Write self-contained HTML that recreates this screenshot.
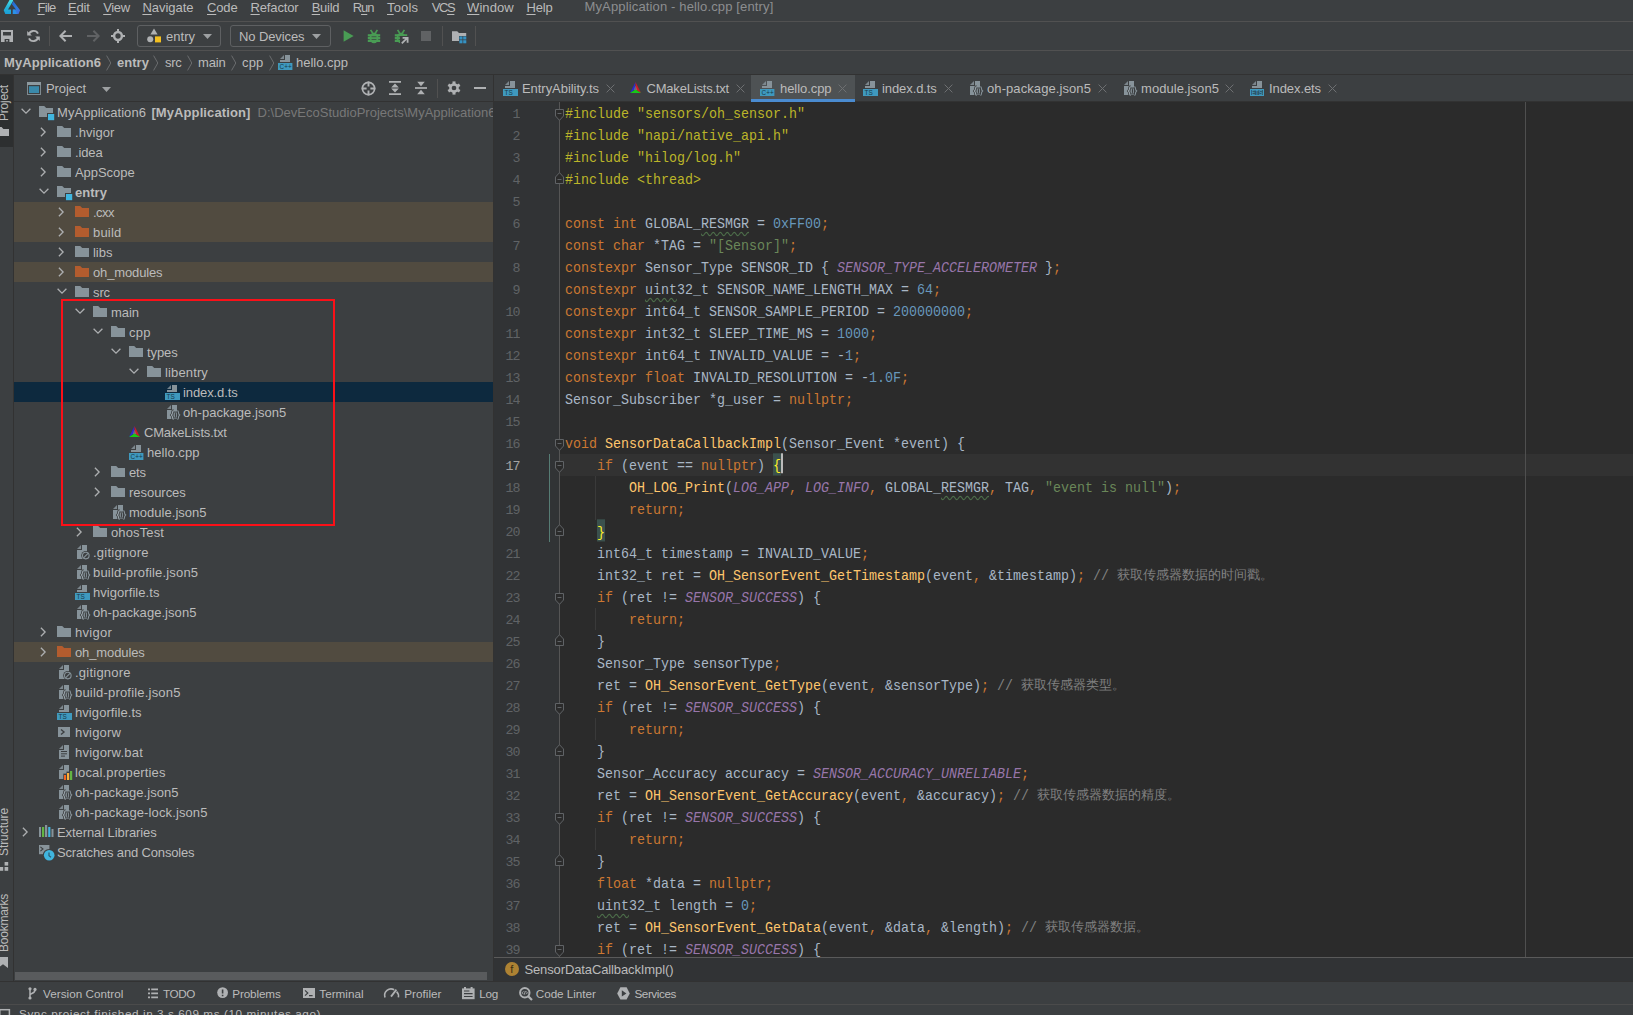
<!DOCTYPE html>
<html lang="en"><head><meta charset="utf-8"><title>MyApplication - hello.cpp [entry]</title>
<style>
html,body{margin:0;padding:0;background:#3c3f41;}
body{width:1633px;height:1015px;overflow:hidden;}
#app{position:relative;width:1633px;height:1015px;overflow:hidden;background:#3c3f41;
 font-family:"Liberation Sans",sans-serif;font-size:13px;color:#bbbbbb;}
#app *{box-sizing:border-box;}
.t{position:absolute;white-space:nowrap;margin:0;padding:0;}
.a{position:absolute;}
svg{position:absolute;overflow:visible;display:block;}
u{text-decoration:underline;text-underline-offset:2px;text-decoration-thickness:1px;}
.hl{position:absolute;height:1px;background:#515151;}
.vl{position:absolute;width:1px;background:#515151;}
/* code */
#code{position:absolute;left:565px;top:104px;font-family:"Liberation Mono",monospace;font-size:13.333px;
 color:#a9b7c6;white-space:pre;}
#code .l{height:22px;line-height:22px;transform:scaleY(1.11);transform-origin:0 14.5px;}
#nums{position:absolute;left:494px;top:104px;width:25.8px;letter-spacing:-0.8px;text-align:right;font-family:"Liberation Mono",monospace;
 font-size:13.333px;color:#606366;}
#nums div{height:22px;line-height:22px;}
.k{color:#cc7832;}
.f{color:#ffc66d;}
.s{color:#6a8759;}
.n{color:#6897bb;}
.m{color:#bbb529;}
.c{color:#9876aa;font-style:italic;}
.cm{color:#808080;}
.cj{transform:scaleY(0.9);transform-origin:0 14.5px;display:inline-block;vertical-align:top;height:22px;line-height:18px;overflow:hidden;font-family:"Liberation Sans",sans-serif;font-size:13px;}
.w{text-decoration:underline wavy #4d6f4a;text-decoration-thickness:1px;text-underline-offset:3px;}
.br{color:#ffef28;background:#3b514d;padding:4.5px 0 0.5px;}
.caret{display:inline-block;width:2px;height:18px;background:#bbbbbb;vertical-align:middle;margin:-4px -2px 0 0;}

</style></head>
<body>
<div id="app">
<!-- menu bar -->
<svg style="left:0;top:0" width="24" height="16" viewBox="0 0 24 16"><defs><linearGradient id="lgA" x1="0" y1="0" x2="0" y2="1"><stop offset="0" stop-color="#4fe9ef"/><stop offset="0.55" stop-color="#27b4d8"/><stop offset="1" stop-color="#1a9fd8"/></linearGradient><linearGradient id="lgB" x1="0" y1="0" x2="1" y2="1"><stop offset="0" stop-color="#1f66cc"/><stop offset="0.6" stop-color="#2f7be0"/><stop offset="1" stop-color="#4a68d6"/></linearGradient></defs><path d="M13.4,-1.5 L10.4,-1.5 L3.7,10.2 L5.3,13.9 H11 V9.6 H8 L12.9,1.2 Z" fill="url(#lgA)"/><path d="M13.2,1.0 L20.1,10.2 L18.5,13.9 H12.8 V9.6 H16 L11.9,4.2 Z" fill="url(#lgB)"/><path d="M12.8,9.6 H15 L17,13.9 H12.8 Z" fill="#2b97e8" opacity="0.8"/></svg>
<div class="t" style="left:37.4px;top:-2.5px;height:20px;line-height:20px;font-size:13px;letter-spacing:-0.663px;"><u>F</u>ile</div>
<div class="t" style="left:68px;top:-2.5px;height:20px;line-height:20px;font-size:13px;letter-spacing:-0.177px;"><u>E</u>dit</div>
<div class="t" style="left:103.2px;top:-2.5px;height:20px;line-height:20px;font-size:13px;letter-spacing:-0.338px;"><u>V</u>iew</div>
<div class="t" style="left:142.4px;top:-2.5px;height:20px;line-height:20px;font-size:13px;letter-spacing:-0.029px;"><u>N</u>avigate</div>
<div class="t" style="left:207px;top:-2.5px;height:20px;line-height:20px;font-size:13px;letter-spacing:-0.123px;"><u>C</u>ode</div>
<div class="t" style="left:250.5px;top:-2.5px;height:20px;line-height:20px;font-size:13px;letter-spacing:-0.143px;"><u>R</u>efactor</div>
<div class="t" style="left:311.7px;top:-2.5px;height:20px;line-height:20px;font-size:13px;letter-spacing:-0.264px;"><u>B</u>uild</div>
<div class="t" style="left:352.7px;top:-2.5px;height:20px;line-height:20px;font-size:13px;letter-spacing:-1.02px;">R<u>u</u>n</div>
<div class="t" style="left:387px;top:-2.5px;height:20px;line-height:20px;font-size:13px;letter-spacing:0.188px;"><u>T</u>ools</div>
<div class="t" style="left:431.7px;top:-2.5px;height:20px;line-height:20px;font-size:13px;letter-spacing:-1.345px;">VC<u>S</u></div>
<div class="t" style="left:467px;top:-2.5px;height:20px;line-height:20px;font-size:13px;letter-spacing:0.092px;"><u>W</u>indow</div>
<div class="t" style="left:526.4px;top:-2.5px;height:20px;line-height:20px;font-size:13px;letter-spacing:-0.162px;"><u>H</u>elp</div>
<div class="t" style="left:584.5px;top:-3.5px;height:20px;line-height:20px;font-size:13px;letter-spacing:0.143px;color:#8c8e90;">MyApplication - hello.cpp [entry]</div>
<div class="hl" style="left:0;top:21px;width:1633px"></div>
<!-- toolbar -->
<svg style="left:1px;top:30px" width="12" height="12" viewBox="0 0 12 12"><path d="M0,0 H12 V12 H0 Z M2,2 V5.6 H10 V2 Z M3.6,9 V12 H8.4 V9 Z" fill="#afb1b3" fill-rule="evenodd"/><rect x="5" y="10.2" width="2" height="1.2" fill="#afb1b3"/></svg>
<svg style="left:27px;top:29px" width="13" height="14" viewBox="0 0 13 14"><path d="M1.8,6 A4.9,4.9 0 0 1 11,4.6" fill="none" stroke="#afb1b3" stroke-width="1.9"/><path d="M11.2,8 A4.9,4.9 0 0 1 2,9.4" fill="none" stroke="#afb1b3" stroke-width="1.9"/><path d="M0.2,2 L0.2,6.6 L4.8,6.6 Z" fill="#afb1b3"/><path d="M12.8,12 L12.8,7.4 L8.2,7.4 Z" fill="#afb1b3"/></svg>
<div class="vl" style="left:49px;top:26px;height:20px"></div>
<svg style="left:59px;top:30px" width="14" height="12" viewBox="0 0 14 12"><path d="M13,6 H2 M6.6,0.8 L1.4,6 L6.6,11.2" fill="none" stroke="#afb1b3" stroke-width="2"/></svg>
<svg style="left:86px;top:30px" width="14" height="12" viewBox="0 0 14 12"><path d="M1,6 H12 M7.4,0.8 L12.6,6 L7.4,11.2" fill="none" stroke="#606264" stroke-width="2"/></svg>
<svg style="left:111px;top:29px" width="14" height="14" viewBox="0 0 14 14"><circle cx="7" cy="7" r="3.9" fill="none" stroke="#afb1b3" stroke-width="2.5"/><path d="M7,0 V2.4 M7,11.6 V14 M0,7 H2.4 M11.6,7 H14" stroke="#afb1b3" stroke-width="2"/></svg>
<div class="a" style="left:137px;top:25px;width:84px;height:22px;border:1px solid #5e6062;border-radius:3px"></div>
<svg style="left:147px;top:28px" width="15" height="15" viewBox="0 0 15 15"><path d="M7,0.4 L10.6,6.4 H3.4 Z" fill="#afb1b3"/><circle cx="3.2" cy="11.2" r="3" fill="#afb1b3"/><rect x="8" y="8.4" width="6" height="6" fill="#f4c020"/></svg>
<div class="t" style="left:166px;top:26.5px;height:20px;line-height:20px;font-size:13px;letter-spacing:0.019px;">entry</div>
<svg style="left:203px;top:34px" width="9" height="5" viewBox="0 0 9 5"><path d="M0,0 H9 L4.5,5 Z" fill="#9da0a2"/></svg>
<div class="a" style="left:230px;top:25px;width:101px;height:22px;border:1px solid #5e6062;border-radius:3px"></div>
<div class="t" style="left:239px;top:26.5px;height:20px;line-height:20px;font-size:13px;letter-spacing:-0.098px;">No Devices</div>
<svg style="left:312px;top:34px" width="9" height="5" viewBox="0 0 9 5"><path d="M0,0 H9 L4.5,5 Z" fill="#9da0a2"/></svg>
<svg style="left:343px;top:30px" width="11" height="12" viewBox="0 0 11 12"><path d="M0.6,0.2 L10.6,6 L0.6,11.8 Z" fill="#499c54"/></svg>
<svg style="left:367px;top:28.6px" width="14" height="15" viewBox="0 0 14 15"><g fill="#499c54"><ellipse cx="7" cy="8.9" rx="4.5" ry="5.3"/><rect x="0.8" y="5.2" width="12.4" height="2.2"/><rect x="0.8" y="8" width="12.4" height="2.2"/><rect x="0.8" y="10.8" width="12.4" height="2.2"/></g><path d="M3.6,0.8 L5.6,4 M10.4,0.8 L8.4,4" stroke="#499c54" stroke-width="1.6" fill="none"/><path d="M4.6,7.7 H9.4 M4.6,10.5 H9.4" stroke="#3c3f41" stroke-width="0.7"/></svg>
<svg style="left:393.5px;top:28.6px" width="14" height="15" viewBox="0 0 14 15"><g fill="#499c54"><ellipse cx="7" cy="8.9" rx="4.5" ry="5.3"/><rect x="0.8" y="5.2" width="12.4" height="2.2"/><rect x="0.8" y="8" width="12.4" height="2.2"/><rect x="0.8" y="10.8" width="12.4" height="2.2"/></g><path d="M3.6,0.8 L5.6,4 M10.4,0.8 L8.4,4" stroke="#499c54" stroke-width="1.6" fill="none"/><path d="M4.6,7.7 H9.4 M4.6,10.5 H9.4" stroke="#3c3f41" stroke-width="0.7"/></svg>
<svg style="left:400px;top:36px" width="9" height="9" viewBox="0 0 9 9"><rect x="0" y="0" width="9" height="9" fill="#3c3f41"/><path d="M1.8,7.4 L6.6,2.6 M2.6,1.8 H7.6 V6.8" fill="none" stroke="#afb1b3" stroke-width="1.8"/></svg>
<div class="a" style="left:421px;top:31px;width:10px;height:10px;background:#606264"></div>
<div class="vl" style="left:442px;top:26px;height:20px"></div>
<svg style="left:452px;top:31px" width="15" height="13" viewBox="0 0 15 13"><path d="M0,0.3 H5.2 L7,2 H14.2 V5 H7 V10 H0 Z" fill="#afb1b3"/><rect x="7.4" y="5.4" width="3.1" height="3.1" fill="#3592c4"/><rect x="11.2" y="5.4" width="3.1" height="3.1" fill="#3592c4"/><rect x="7.4" y="9.2" width="3.1" height="3.1" fill="#3592c4"/><rect x="11.2" y="9.2" width="3.1" height="3.1" fill="#3592c4"/></svg>
<div class="vl" style="left:475px;top:26px;height:20px"></div>
<div class="hl" style="left:0;top:50px;width:1633px"></div>
<!-- navigation bar -->
<div class="t" style="left:4px;top:52.5px;height:20px;line-height:20px;font-size:13px;letter-spacing:0.067px;font-weight:bold;">MyApplication6</div>
<svg style="left:106px;top:55px" width="6" height="16" viewBox="0 0 6 16"><path d="M0.6,0.6 L4.8,8 L0.6,15.4" fill="none" stroke="#6a6c6e" stroke-width="1"/></svg>
<div class="t" style="left:117px;top:52.5px;height:20px;line-height:20px;font-size:13px;letter-spacing:0.041px;font-weight:bold;">entry</div>
<svg style="left:153px;top:55px" width="6" height="16" viewBox="0 0 6 16"><path d="M0.6,0.6 L4.8,8 L0.6,15.4" fill="none" stroke="#6a6c6e" stroke-width="1"/></svg>
<div class="t" style="left:165px;top:52.5px;height:20px;line-height:20px;font-size:13px;letter-spacing:-0.276px;">src</div>
<svg style="left:187px;top:55px" width="6" height="16" viewBox="0 0 6 16"><path d="M0.6,0.6 L4.8,8 L0.6,15.4" fill="none" stroke="#6a6c6e" stroke-width="1"/></svg>
<div class="t" style="left:198px;top:52.5px;height:20px;line-height:20px;font-size:13px;letter-spacing:-0.172px;">main</div>
<svg style="left:231px;top:55px" width="6" height="16" viewBox="0 0 6 16"><path d="M0.6,0.6 L4.8,8 L0.6,15.4" fill="none" stroke="#6a6c6e" stroke-width="1"/></svg>
<div class="t" style="left:242px;top:52.5px;height:20px;line-height:20px;font-size:13px;letter-spacing:0.177px;">cpp</div>
<svg style="left:269px;top:55px" width="6" height="16" viewBox="0 0 6 16"><path d="M0.6,0.6 L4.8,8 L0.6,15.4" fill="none" stroke="#6a6c6e" stroke-width="1"/></svg>
<svg style="left:277.6px;top:54px" width="16" height="16" viewBox="0 0 16 16"><path d="M2,5 L6,1 V5 Z" fill="#87939a" opacity="0.85"/><path d="M7,1 H12 V8 H2 V6 H7 Z" fill="#87939a"/><rect x="0" y="9" width="14.4" height="7" fill="#3f99be"/><text x="1.6" y="15.1" font-family="Liberation Sans,sans-serif" font-size="6.8" fill="#173a4a" textLength="12" lengthAdjust="spacingAndGlyphs">C++</text></svg>
<div class="t" style="left:296px;top:52.5px;height:20px;line-height:20px;font-size:13px;letter-spacing:-0.007px;">hello.cpp</div>
<div class="hl" style="left:0;top:74px;width:1633px;background:#323232"></div>
<!-- left strip -->
<div class="a" style="left:0;top:75px;width:13px;height:72px;background:#2d2f30"></div>
<div class="vl" style="left:13px;top:75px;height:907px;background:#323232"></div>
<div class="t" style="left:-3px;top:121px;width:40px;height:14px;line-height:14px;font-size:12px;letter-spacing:-0.192px;color:#bbbbbb;transform-origin:0 0;transform:rotate(-90deg)">Project</div>
<svg style="left:0px;top:127px" width="9" height="9" viewBox="0 0 9 9"><path d="M-5,0 H1.6 L3.4,2 H9 V9 H-5 Z" fill="#afb1b3"/></svg>
<div class="t" style="left:-3px;top:856px;width:52px;height:14px;line-height:14px;font-size:12px;letter-spacing:-0.075px;color:#bbbbbb;transform-origin:0 0;transform:rotate(-90deg)">Structure</div>
<svg style="left:0px;top:862px" width="9" height="9" viewBox="0 0 9 9"><rect x="4.6" y="0" width="3.6" height="3.6" fill="#afb1b3"/><rect x="-0.4" y="5" width="3.6" height="3.8" fill="#afb1b3"/><rect x="4.6" y="5" width="3.6" height="3.8" fill="#afb1b3"/></svg>
<div class="t" style="left:-3px;top:952px;width:62px;height:14px;line-height:14px;font-size:12px;letter-spacing:-0.224px;color:#bbbbbb;transform-origin:0 0;transform:rotate(-90deg)">Bookmarks</div>
<svg style="left:0px;top:957px" width="9" height="11" viewBox="0 0 9 11"><path d="M-2,0 H8 V11 L3,7.2 L-2,11 Z" fill="#afb1b3"/></svg>
<!-- project header -->
<svg style="left:27px;top:82px" width="14" height="13" viewBox="0 0 14 13"><rect x="0.5" y="0.5" width="13" height="12" fill="none" stroke="#7f8b91" stroke-width="1"/><rect x="0" y="0" width="14" height="3" fill="#8d999f"/><rect x="2" y="4.2" width="10" height="6.8" fill="#3a89aa"/></svg>
<div class="t" style="left:46px;top:78.5px;height:20px;line-height:20px;font-size:13px;letter-spacing:-0.067px;">Project</div>
<svg style="left:102px;top:87px" width="9" height="5" viewBox="0 0 9 5"><path d="M0,0 H9 L4.5,5 Z" fill="#9da0a2"/></svg>
<svg style="left:361px;top:80.5px" width="15" height="15" viewBox="0 0 15 15"><circle cx="7.5" cy="7.5" r="6.1" fill="none" stroke="#afb1b3" stroke-width="1.7"/><path d="M7.5,0.6 V5.6 M7.5,9.4 V14.4 M0.6,7.5 H5.6 M9.4,7.5 H14.4" stroke="#afb1b3" stroke-width="1.9"/></svg>
<svg style="left:389px;top:81px" width="12" height="14" viewBox="0 0 12 14"><path d="M0,0.9 H12 M0,13.1 H12" stroke="#afb1b3" stroke-width="1.7"/><path d="M6,2.6 L9.8,6.4 H2.2 Z M6,11.4 L9.8,7.6 H2.2 Z" fill="#afb1b3"/></svg>
<svg style="left:415px;top:81px" width="12" height="14" viewBox="0 0 12 14"><path d="M0,7 H12" stroke="#afb1b3" stroke-width="1.7"/><path d="M6,5.2 L9.8,0.8 H2.2 Z M6,8.8 L9.8,13.2 H2.2 Z" fill="#afb1b3"/></svg>
<div class="vl" style="left:437px;top:79px;height:19px"></div>
<svg style="left:447px;top:81px" width="14" height="14" viewBox="0 0 14 14"><g transform="translate(7,7)"><rect x="-1.5" y="-6.6" width="3" height="3.2" fill="#afb1b3" transform="rotate(0)"/><rect x="-1.5" y="-6.6" width="3" height="3.2" fill="#afb1b3" transform="rotate(60)"/><rect x="-1.5" y="-6.6" width="3" height="3.2" fill="#afb1b3" transform="rotate(120)"/><rect x="-1.5" y="-6.6" width="3" height="3.2" fill="#afb1b3" transform="rotate(180)"/><rect x="-1.5" y="-6.6" width="3" height="3.2" fill="#afb1b3" transform="rotate(240)"/><rect x="-1.5" y="-6.6" width="3" height="3.2" fill="#afb1b3" transform="rotate(300)"/><circle r="3.6" fill="none" stroke="#afb1b3" stroke-width="2.5"/></g></svg>
<div class="a" style="left:474px;top:87px;width:12px;height:2px;background:#afb1b3"></div>
<div class="hl" style="left:14px;top:101px;width:480px;background:#323232"></div>
<!-- project tree -->
<div class="a" style="left:14px;top:102px;width:479px;height:869px;overflow:hidden">
<svg style="left:5.5px;top:5.4px" width="12" height="8" viewBox="0 0 12 8"><path d="M1.6,1.8 L6,6.2 L10.4,1.8" fill="none" stroke="#adafb1" stroke-width="1.3"/></svg>
<svg style="left:25px;top:4px" width="16" height="15" viewBox="0 0 16 15"><path d="M0,0 H5.2 L7.2,2 H14 V11 H0 Z" fill="#87939a"/><rect x="8" y="7" width="8" height="8" fill="#3c3f41"/><rect x="9" y="8" width="6.2" height="6.2" fill="#40b6e0"/></svg>
<div class="t" style="left:43px;top:0.5px;height:20px;line-height:20px;font-size:13px;letter-spacing:0.058px;">MyApplication6</div>
<div class="t" style="left:137.4px;top:0.5px;height:20px;line-height:20px;font-size:13px;letter-spacing:0.101px;font-weight:bold;">[MyApplication]</div>
<div class="t" style="left:243.60000000000002px;top:0.5px;height:20px;line-height:20px;font-size:13px;letter-spacing:0.006px;color:#787878;">D:\DevEcoStudioProjects\MyApplication6</div>
<svg style="left:25.4px;top:23.5px" width="8" height="12" viewBox="0 0 8 12"><path d="M1.9,1.8 L6.1,6 L1.9,10.2" fill="none" stroke="#adafb1" stroke-width="1.3"/></svg>
<svg style="left:43px;top:24px" width="14" height="11" viewBox="0 0 14 11"><path d="M0,0 H5.2 L7.2,2 H14 V11 H0 Z" fill="#87939a"/></svg>
<div class="t" style="left:61px;top:20.5px;height:20px;line-height:20px;font-size:13px;letter-spacing:0.067px;">.hvigor</div>
<svg style="left:25.4px;top:43.5px" width="8" height="12" viewBox="0 0 8 12"><path d="M1.9,1.8 L6.1,6 L1.9,10.2" fill="none" stroke="#adafb1" stroke-width="1.3"/></svg>
<svg style="left:43px;top:44px" width="14" height="11" viewBox="0 0 14 11"><path d="M0,0 H5.2 L7.2,2 H14 V11 H0 Z" fill="#87939a"/></svg>
<div class="t" style="left:61px;top:40.5px;height:20px;line-height:20px;font-size:13px;letter-spacing:-0.141px;">.idea</div>
<svg style="left:25.4px;top:63.5px" width="8" height="12" viewBox="0 0 8 12"><path d="M1.9,1.8 L6.1,6 L1.9,10.2" fill="none" stroke="#adafb1" stroke-width="1.3"/></svg>
<svg style="left:43px;top:64px" width="14" height="11" viewBox="0 0 14 11"><path d="M0,0 H5.2 L7.2,2 H14 V11 H0 Z" fill="#87939a"/></svg>
<div class="t" style="left:61px;top:60.5px;height:20px;line-height:20px;font-size:13px;letter-spacing:-0.052px;">AppScope</div>
<svg style="left:23.5px;top:85.4px" width="12" height="8" viewBox="0 0 12 8"><path d="M1.6,1.8 L6,6.2 L10.4,1.8" fill="none" stroke="#adafb1" stroke-width="1.3"/></svg>
<svg style="left:43px;top:84px" width="16" height="15" viewBox="0 0 16 15"><path d="M0,0 H5.2 L7.2,2 H14 V11 H0 Z" fill="#87939a"/><rect x="8" y="7" width="8" height="8" fill="#3c3f41"/><rect x="9" y="8" width="6.2" height="6.2" fill="#40b6e0"/></svg>
<div class="t" style="left:61px;top:80.5px;height:20px;line-height:20px;font-size:13px;letter-spacing:0.041px;font-weight:bold;">entry</div>
<div class="a" style="left:0;top:100px;width:479px;height:20px;background:#514b40"></div>
<svg style="left:43.4px;top:103.5px" width="8" height="12" viewBox="0 0 8 12"><path d="M1.9,1.8 L6.1,6 L1.9,10.2" fill="none" stroke="#adafb1" stroke-width="1.3"/></svg>
<svg style="left:61px;top:104px" width="14" height="11" viewBox="0 0 14 11"><path d="M0,0 H5.2 L7.2,2 H14 V11 H0 Z" fill="#b35c2e"/></svg>
<div class="t" style="left:79px;top:100.5px;height:20px;line-height:20px;font-size:13px;letter-spacing:-0.527px;">.cxx</div>
<div class="a" style="left:0;top:120px;width:479px;height:20px;background:#514b40"></div>
<svg style="left:43.4px;top:123.5px" width="8" height="12" viewBox="0 0 8 12"><path d="M1.9,1.8 L6.1,6 L1.9,10.2" fill="none" stroke="#adafb1" stroke-width="1.3"/></svg>
<svg style="left:61px;top:124px" width="14" height="11" viewBox="0 0 14 11"><path d="M0,0 H5.2 L7.2,2 H14 V11 H0 Z" fill="#b35c2e"/></svg>
<div class="t" style="left:79px;top:120.5px;height:20px;line-height:20px;font-size:13px;letter-spacing:0.183px;">build</div>
<svg style="left:43.4px;top:143.5px" width="8" height="12" viewBox="0 0 8 12"><path d="M1.9,1.8 L6.1,6 L1.9,10.2" fill="none" stroke="#adafb1" stroke-width="1.3"/></svg>
<svg style="left:61px;top:144px" width="14" height="11" viewBox="0 0 14 11"><path d="M0,0 H5.2 L7.2,2 H14 V11 H0 Z" fill="#87939a"/></svg>
<div class="t" style="left:79px;top:140.5px;height:20px;line-height:20px;font-size:13px;letter-spacing:-0.029px;">libs</div>
<div class="a" style="left:0;top:160px;width:479px;height:20px;background:#514b40"></div>
<svg style="left:43.4px;top:163.5px" width="8" height="12" viewBox="0 0 8 12"><path d="M1.9,1.8 L6.1,6 L1.9,10.2" fill="none" stroke="#adafb1" stroke-width="1.3"/></svg>
<svg style="left:61px;top:164px" width="14" height="11" viewBox="0 0 14 11"><path d="M0,0 H5.2 L7.2,2 H14 V11 H0 Z" fill="#b35c2e"/></svg>
<div class="t" style="left:79px;top:160.5px;height:20px;line-height:20px;font-size:13px;letter-spacing:-0.136px;">oh_modules</div>
<svg style="left:41.5px;top:185.4px" width="12" height="8" viewBox="0 0 12 8"><path d="M1.6,1.8 L6,6.2 L10.4,1.8" fill="none" stroke="#adafb1" stroke-width="1.3"/></svg>
<svg style="left:61px;top:184px" width="14" height="11" viewBox="0 0 14 11"><path d="M0,0 H5.2 L7.2,2 H14 V11 H0 Z" fill="#87939a"/></svg>
<div class="t" style="left:79px;top:180.5px;height:20px;line-height:20px;font-size:13px;letter-spacing:-0.109px;">src</div>
<svg style="left:59.5px;top:205.4px" width="12" height="8" viewBox="0 0 12 8"><path d="M1.6,1.8 L6,6.2 L10.4,1.8" fill="none" stroke="#adafb1" stroke-width="1.3"/></svg>
<svg style="left:79px;top:204px" width="14" height="11" viewBox="0 0 14 11"><path d="M0,0 H5.2 L7.2,2 H14 V11 H0 Z" fill="#87939a"/></svg>
<div class="t" style="left:97px;top:200.5px;height:20px;line-height:20px;font-size:13px;letter-spacing:-0.047px;">main</div>
<svg style="left:77.5px;top:225.4px" width="12" height="8" viewBox="0 0 12 8"><path d="M1.6,1.8 L6,6.2 L10.4,1.8" fill="none" stroke="#adafb1" stroke-width="1.3"/></svg>
<svg style="left:97px;top:224px" width="14" height="11" viewBox="0 0 14 11"><path d="M0,0 H5.2 L7.2,2 H14 V11 H0 Z" fill="#87939a"/></svg>
<div class="t" style="left:115px;top:220.5px;height:20px;line-height:20px;font-size:13px;letter-spacing:0.277px;">cpp</div>
<svg style="left:95.5px;top:245.4px" width="12" height="8" viewBox="0 0 12 8"><path d="M1.6,1.8 L6,6.2 L10.4,1.8" fill="none" stroke="#adafb1" stroke-width="1.3"/></svg>
<svg style="left:115px;top:244px" width="14" height="11" viewBox="0 0 14 11"><path d="M0,0 H5.2 L7.2,2 H14 V11 H0 Z" fill="#87939a"/></svg>
<div class="t" style="left:133px;top:240.5px;height:20px;line-height:20px;font-size:13px;letter-spacing:-0.076px;">types</div>
<svg style="left:113.5px;top:265.4px" width="12" height="8" viewBox="0 0 12 8"><path d="M1.6,1.8 L6,6.2 L10.4,1.8" fill="none" stroke="#adafb1" stroke-width="1.3"/></svg>
<svg style="left:133px;top:264px" width="14" height="11" viewBox="0 0 14 11"><path d="M0,0 H5.2 L7.2,2 H14 V11 H0 Z" fill="#87939a"/></svg>
<div class="t" style="left:151px;top:260.5px;height:20px;line-height:20px;font-size:13px;letter-spacing:0.135px;">libentry</div>
<div class="a" style="left:0;top:280px;width:479px;height:20px;background:#0d293e"></div>
<svg style="left:151px;top:282px" width="16" height="16" viewBox="0 0 16 16"><path d="M2,5 L6,1 V5 Z" fill="#87939a" opacity="0.85"/><path d="M7,1 H12 V8 H2 V6 H7 Z" fill="#87939a"/><rect x="0" y="9" width="15" height="7" fill="#3f99be"/><text x="1.6" y="15.1" font-family="Liberation Sans,sans-serif" font-size="6.8" fill="#173a4a" textLength="8.2" lengthAdjust="spacingAndGlyphs">TS</text></svg>
<div class="t" style="left:169px;top:280.5px;height:20px;line-height:20px;font-size:13px;letter-spacing:-0.096px;">index.d.ts</div>
<svg style="left:151px;top:302px" width="17" height="17" viewBox="0 0 17 17"><path d="M2,5 L6,1 V5 Z" fill="#87939a" opacity="0.85"/><path d="M7,1 H12 V15 H2 V6 H7 Z" fill="#87939a"/><rect x="5.5" y="6" width="10.5" height="10.5" rx="3" fill="#3c3f41" opacity="0"/><path d="M8.6,6.6 C7.2,6.6 7.6,9 7.2,10 C7,10.6 6.2,10.8 6.2,11 C6.2,11.2 7,11.4 7.2,12 C7.6,13 7.2,15.4 8.6,15.4" fill="none" stroke="#3c3f41" stroke-width="2.6"/><path d="M12.4,6.6 C13.8,6.6 13.4,9 13.8,10 C14,10.6 14.8,10.8 14.8,11 C14.8,11.2 14,11.4 13.8,12 C13.4,13 13.8,15.4 12.4,15.4" fill="none" stroke="#3c3f41" stroke-width="2.6"/><ellipse cx="10.5" cy="11" rx="1.9" ry="4" fill="#3c3f41"/><path d="M8.6,6.6 C7.2,6.6 7.6,9 7.2,10 C7,10.6 6.2,10.8 6.2,11 C6.2,11.2 7,11.4 7.2,12 C7.6,13 7.2,15.4 8.6,15.4" fill="none" stroke="#9aa5ac" stroke-width="1.1"/><path d="M12.4,6.6 C13.8,6.6 13.4,9 13.8,10 C14,10.6 14.8,10.8 14.8,11 C14.8,11.2 14,11.4 13.8,12 C13.4,13 13.8,15.4 12.4,15.4" fill="none" stroke="#87939a" stroke-width="1.1"/><ellipse cx="10.5" cy="11" rx="1.1" ry="3.2" fill="none" stroke="#87939a" stroke-width="0.9"/></svg>
<div class="t" style="left:169px;top:300.5px;height:20px;line-height:20px;font-size:13px;letter-spacing:0.046px;">oh-package.json5</div>
<svg style="left:115px;top:324px" width="12" height="12" viewBox="0 0 12 12"><path d="M5.5,0 L0,11 L5.2,7.2 Z" fill="#2a2ad0"/><path d="M5.5,0 L11,11 L5.8,7.4 Z" fill="#d01828"/><path d="M0,11 L11,11 L5.5,7.4 Z" fill="#18c818"/><path d="M5.5,3.6 L3.6,8 L7.4,8 Z" fill="#8a8a8a" opacity="0.55"/></svg>
<div class="t" style="left:130px;top:320.5px;height:20px;line-height:20px;font-size:13px;letter-spacing:-0.175px;">CMakeLists.txt</div>
<svg style="left:115px;top:342px" width="16" height="16" viewBox="0 0 16 16"><path d="M2,5 L6,1 V5 Z" fill="#87939a" opacity="0.85"/><path d="M7,1 H12 V8 H2 V6 H7 Z" fill="#87939a"/><rect x="0" y="9" width="14.4" height="7" fill="#3f99be"/><text x="1.6" y="15.1" font-family="Liberation Sans,sans-serif" font-size="6.8" fill="#173a4a" textLength="12" lengthAdjust="spacingAndGlyphs">C++</text></svg>
<div class="t" style="left:133px;top:340.5px;height:20px;line-height:20px;font-size:13px;letter-spacing:0.049px;">hello.cpp</div>
<svg style="left:79.4px;top:363.5px" width="8" height="12" viewBox="0 0 8 12"><path d="M1.9,1.8 L6.1,6 L1.9,10.2" fill="none" stroke="#adafb1" stroke-width="1.3"/></svg>
<svg style="left:97px;top:364px" width="14" height="11" viewBox="0 0 14 11"><path d="M0,0 H5.2 L7.2,2 H14 V11 H0 Z" fill="#87939a"/></svg>
<div class="t" style="left:115px;top:360.5px;height:20px;line-height:20px;font-size:13px;letter-spacing:-0.181px;">ets</div>
<svg style="left:79.4px;top:383.5px" width="8" height="12" viewBox="0 0 8 12"><path d="M1.9,1.8 L6.1,6 L1.9,10.2" fill="none" stroke="#adafb1" stroke-width="1.3"/></svg>
<svg style="left:97px;top:384px" width="14" height="11" viewBox="0 0 14 11"><path d="M0,0 H5.2 L7.2,2 H14 V11 H0 Z" fill="#87939a"/></svg>
<div class="t" style="left:115px;top:380.5px;height:20px;line-height:20px;font-size:13px;letter-spacing:-0.033px;">resources</div>
<svg style="left:97px;top:402px" width="17" height="17" viewBox="0 0 17 17"><path d="M2,5 L6,1 V5 Z" fill="#87939a" opacity="0.85"/><path d="M7,1 H12 V15 H2 V6 H7 Z" fill="#87939a"/><rect x="5.5" y="6" width="10.5" height="10.5" rx="3" fill="#3c3f41" opacity="0"/><path d="M8.6,6.6 C7.2,6.6 7.6,9 7.2,10 C7,10.6 6.2,10.8 6.2,11 C6.2,11.2 7,11.4 7.2,12 C7.6,13 7.2,15.4 8.6,15.4" fill="none" stroke="#3c3f41" stroke-width="2.6"/><path d="M12.4,6.6 C13.8,6.6 13.4,9 13.8,10 C14,10.6 14.8,10.8 14.8,11 C14.8,11.2 14,11.4 13.8,12 C13.4,13 13.8,15.4 12.4,15.4" fill="none" stroke="#3c3f41" stroke-width="2.6"/><ellipse cx="10.5" cy="11" rx="1.9" ry="4" fill="#3c3f41"/><path d="M8.6,6.6 C7.2,6.6 7.6,9 7.2,10 C7,10.6 6.2,10.8 6.2,11 C6.2,11.2 7,11.4 7.2,12 C7.6,13 7.2,15.4 8.6,15.4" fill="none" stroke="#9aa5ac" stroke-width="1.1"/><path d="M12.4,6.6 C13.8,6.6 13.4,9 13.8,10 C14,10.6 14.8,10.8 14.8,11 C14.8,11.2 14,11.4 13.8,12 C13.4,13 13.8,15.4 12.4,15.4" fill="none" stroke="#87939a" stroke-width="1.1"/><ellipse cx="10.5" cy="11" rx="1.1" ry="3.2" fill="none" stroke="#87939a" stroke-width="0.9"/></svg>
<div class="t" style="left:115px;top:400.5px;height:20px;line-height:20px;font-size:13px;letter-spacing:0.02px;">module.json5</div>
<svg style="left:61.400000000000006px;top:423.5px" width="8" height="12" viewBox="0 0 8 12"><path d="M1.9,1.8 L6.1,6 L1.9,10.2" fill="none" stroke="#adafb1" stroke-width="1.3"/></svg>
<svg style="left:79px;top:424px" width="14" height="11" viewBox="0 0 14 11"><path d="M0,0 H5.2 L7.2,2 H14 V11 H0 Z" fill="#87939a"/></svg>
<div class="t" style="left:97px;top:420.5px;height:20px;line-height:20px;font-size:13px;letter-spacing:0.119px;">ohosTest</div>
<svg style="left:61px;top:442px" width="17" height="17" viewBox="0 0 17 17"><path d="M2,5 L6,1 V5 Z" fill="#87939a" opacity="0.85"/><path d="M7,1 H12 V15 H2 V6 H7 Z" fill="#87939a"/><circle cx="10.8" cy="11.6" r="4.6" fill="#3c3f41"/><circle cx="10.8" cy="11.6" r="3.3" fill="none" stroke="#87939a" stroke-width="1.1"/><path d="M8.6,13.8 L13,9.4" stroke="#87939a" stroke-width="1.1"/></svg>
<div class="t" style="left:79px;top:440.5px;height:20px;line-height:20px;font-size:13px;letter-spacing:0.23px;">.gitignore</div>
<svg style="left:61px;top:462px" width="17" height="17" viewBox="0 0 17 17"><path d="M2,5 L6,1 V5 Z" fill="#87939a" opacity="0.85"/><path d="M7,1 H12 V15 H2 V6 H7 Z" fill="#87939a"/><rect x="5.5" y="6" width="10.5" height="10.5" rx="3" fill="#3c3f41" opacity="0"/><path d="M8.6,6.6 C7.2,6.6 7.6,9 7.2,10 C7,10.6 6.2,10.8 6.2,11 C6.2,11.2 7,11.4 7.2,12 C7.6,13 7.2,15.4 8.6,15.4" fill="none" stroke="#3c3f41" stroke-width="2.6"/><path d="M12.4,6.6 C13.8,6.6 13.4,9 13.8,10 C14,10.6 14.8,10.8 14.8,11 C14.8,11.2 14,11.4 13.8,12 C13.4,13 13.8,15.4 12.4,15.4" fill="none" stroke="#3c3f41" stroke-width="2.6"/><ellipse cx="10.5" cy="11" rx="1.9" ry="4" fill="#3c3f41"/><path d="M8.6,6.6 C7.2,6.6 7.6,9 7.2,10 C7,10.6 6.2,10.8 6.2,11 C6.2,11.2 7,11.4 7.2,12 C7.6,13 7.2,15.4 8.6,15.4" fill="none" stroke="#9aa5ac" stroke-width="1.1"/><path d="M12.4,6.6 C13.8,6.6 13.4,9 13.8,10 C14,10.6 14.8,10.8 14.8,11 C14.8,11.2 14,11.4 13.8,12 C13.4,13 13.8,15.4 12.4,15.4" fill="none" stroke="#87939a" stroke-width="1.1"/><ellipse cx="10.5" cy="11" rx="1.1" ry="3.2" fill="none" stroke="#87939a" stroke-width="0.9"/></svg>
<div class="t" style="left:79px;top:460.5px;height:20px;line-height:20px;font-size:13px;letter-spacing:0.177px;">build-profile.json5</div>
<svg style="left:61px;top:482px" width="16" height="16" viewBox="0 0 16 16"><path d="M2,5 L6,1 V5 Z" fill="#87939a" opacity="0.85"/><path d="M7,1 H12 V8 H2 V6 H7 Z" fill="#87939a"/><rect x="0" y="9" width="15" height="7" fill="#3f99be"/><text x="1.6" y="15.1" font-family="Liberation Sans,sans-serif" font-size="6.8" fill="#173a4a" textLength="8.2" lengthAdjust="spacingAndGlyphs">TS</text></svg>
<div class="t" style="left:79px;top:480.5px;height:20px;line-height:20px;font-size:13px;letter-spacing:0.056px;">hvigorfile.ts</div>
<svg style="left:61px;top:502px" width="17" height="17" viewBox="0 0 17 17"><path d="M2,5 L6,1 V5 Z" fill="#87939a" opacity="0.85"/><path d="M7,1 H12 V15 H2 V6 H7 Z" fill="#87939a"/><rect x="5.5" y="6" width="10.5" height="10.5" rx="3" fill="#3c3f41" opacity="0"/><path d="M8.6,6.6 C7.2,6.6 7.6,9 7.2,10 C7,10.6 6.2,10.8 6.2,11 C6.2,11.2 7,11.4 7.2,12 C7.6,13 7.2,15.4 8.6,15.4" fill="none" stroke="#3c3f41" stroke-width="2.6"/><path d="M12.4,6.6 C13.8,6.6 13.4,9 13.8,10 C14,10.6 14.8,10.8 14.8,11 C14.8,11.2 14,11.4 13.8,12 C13.4,13 13.8,15.4 12.4,15.4" fill="none" stroke="#3c3f41" stroke-width="2.6"/><ellipse cx="10.5" cy="11" rx="1.9" ry="4" fill="#3c3f41"/><path d="M8.6,6.6 C7.2,6.6 7.6,9 7.2,10 C7,10.6 6.2,10.8 6.2,11 C6.2,11.2 7,11.4 7.2,12 C7.6,13 7.2,15.4 8.6,15.4" fill="none" stroke="#9aa5ac" stroke-width="1.1"/><path d="M12.4,6.6 C13.8,6.6 13.4,9 13.8,10 C14,10.6 14.8,10.8 14.8,11 C14.8,11.2 14,11.4 13.8,12 C13.4,13 13.8,15.4 12.4,15.4" fill="none" stroke="#87939a" stroke-width="1.1"/><ellipse cx="10.5" cy="11" rx="1.1" ry="3.2" fill="none" stroke="#87939a" stroke-width="0.9"/></svg>
<div class="t" style="left:79px;top:500.5px;height:20px;line-height:20px;font-size:13px;letter-spacing:0.052px;">oh-package.json5</div>
<svg style="left:25.4px;top:523.5px" width="8" height="12" viewBox="0 0 8 12"><path d="M1.9,1.8 L6.1,6 L1.9,10.2" fill="none" stroke="#adafb1" stroke-width="1.3"/></svg>
<svg style="left:43px;top:524px" width="14" height="11" viewBox="0 0 14 11"><path d="M0,0 H5.2 L7.2,2 H14 V11 H0 Z" fill="#87939a"/></svg>
<div class="t" style="left:61px;top:520.5px;height:20px;line-height:20px;font-size:13px;letter-spacing:0.263px;">hvigor</div>
<div class="a" style="left:0;top:540px;width:479px;height:20px;background:#514b40"></div>
<svg style="left:25.4px;top:543.5px" width="8" height="12" viewBox="0 0 8 12"><path d="M1.9,1.8 L6.1,6 L1.9,10.2" fill="none" stroke="#adafb1" stroke-width="1.3"/></svg>
<svg style="left:43px;top:544px" width="14" height="11" viewBox="0 0 14 11"><path d="M0,0 H5.2 L7.2,2 H14 V11 H0 Z" fill="#b35c2e"/></svg>
<div class="t" style="left:61px;top:540.5px;height:20px;line-height:20px;font-size:13px;letter-spacing:-0.106px;">oh_modules</div>
<svg style="left:43px;top:562px" width="17" height="17" viewBox="0 0 17 17"><path d="M2,5 L6,1 V5 Z" fill="#87939a" opacity="0.85"/><path d="M7,1 H12 V15 H2 V6 H7 Z" fill="#87939a"/><circle cx="10.8" cy="11.6" r="4.6" fill="#3c3f41"/><circle cx="10.8" cy="11.6" r="3.3" fill="none" stroke="#87939a" stroke-width="1.1"/><path d="M8.6,13.8 L13,9.4" stroke="#87939a" stroke-width="1.1"/></svg>
<div class="t" style="left:61px;top:560.5px;height:20px;line-height:20px;font-size:13px;letter-spacing:0.23px;">.gitignore</div>
<svg style="left:43px;top:582px" width="17" height="17" viewBox="0 0 17 17"><path d="M2,5 L6,1 V5 Z" fill="#87939a" opacity="0.85"/><path d="M7,1 H12 V15 H2 V6 H7 Z" fill="#87939a"/><rect x="5.5" y="6" width="10.5" height="10.5" rx="3" fill="#3c3f41" opacity="0"/><path d="M8.6,6.6 C7.2,6.6 7.6,9 7.2,10 C7,10.6 6.2,10.8 6.2,11 C6.2,11.2 7,11.4 7.2,12 C7.6,13 7.2,15.4 8.6,15.4" fill="none" stroke="#3c3f41" stroke-width="2.6"/><path d="M12.4,6.6 C13.8,6.6 13.4,9 13.8,10 C14,10.6 14.8,10.8 14.8,11 C14.8,11.2 14,11.4 13.8,12 C13.4,13 13.8,15.4 12.4,15.4" fill="none" stroke="#3c3f41" stroke-width="2.6"/><ellipse cx="10.5" cy="11" rx="1.9" ry="4" fill="#3c3f41"/><path d="M8.6,6.6 C7.2,6.6 7.6,9 7.2,10 C7,10.6 6.2,10.8 6.2,11 C6.2,11.2 7,11.4 7.2,12 C7.6,13 7.2,15.4 8.6,15.4" fill="none" stroke="#9aa5ac" stroke-width="1.1"/><path d="M12.4,6.6 C13.8,6.6 13.4,9 13.8,10 C14,10.6 14.8,10.8 14.8,11 C14.8,11.2 14,11.4 13.8,12 C13.4,13 13.8,15.4 12.4,15.4" fill="none" stroke="#87939a" stroke-width="1.1"/><ellipse cx="10.5" cy="11" rx="1.1" ry="3.2" fill="none" stroke="#87939a" stroke-width="0.9"/></svg>
<div class="t" style="left:61px;top:580.5px;height:20px;line-height:20px;font-size:13px;letter-spacing:0.198px;">build-profile.json5</div>
<svg style="left:43px;top:602px" width="16" height="16" viewBox="0 0 16 16"><path d="M2,5 L6,1 V5 Z" fill="#87939a" opacity="0.85"/><path d="M7,1 H12 V8 H2 V6 H7 Z" fill="#87939a"/><rect x="0" y="9" width="15" height="7" fill="#3f99be"/><text x="1.6" y="15.1" font-family="Liberation Sans,sans-serif" font-size="6.8" fill="#173a4a" textLength="8.2" lengthAdjust="spacingAndGlyphs">TS</text></svg>
<div class="t" style="left:61px;top:600.5px;height:20px;line-height:20px;font-size:13px;letter-spacing:0.072px;">hvigorfile.ts</div>
<svg style="left:43px;top:622px" width="16" height="16" viewBox="0 0 16 16"><rect x="1" y="3" width="12" height="10" fill="#87939a"/><path d="M4,5.5 L7,8 L4,10.5" fill="none" stroke="#3c3f41" stroke-width="1.4"/></svg>
<div class="t" style="left:61px;top:620.5px;height:20px;line-height:20px;font-size:13px;letter-spacing:0.17px;">hvigorw</div>
<svg style="left:43px;top:642px" width="16" height="16" viewBox="0 0 16 16"><path d="M2,5 L6,1 V5 Z" fill="#87939a" opacity="0.85"/><path d="M7,1 H12 V15 H2 V6 H7 Z" fill="#87939a"/><path d="M4,7.5 H10 M4,9.8 H10 M4,12.1 H8" stroke="#3c3f41" stroke-width="1"/></svg>
<div class="t" style="left:61px;top:640.5px;height:20px;line-height:20px;font-size:13px;letter-spacing:0.202px;">hvigorw.bat</div>
<svg style="left:43px;top:662px" width="17" height="17" viewBox="0 0 17 17"><path d="M2,5 L6,1 V5 Z" fill="#87939a" opacity="0.85"/><path d="M7,1 H12 V15 H2 V6 H7 Z" fill="#87939a"/><rect x="6" y="6" width="10" height="11" fill="#3c3f41" opacity="0"/><rect x="6.3" y="9.6" width="3.6" height="7" fill="#3c3f41"/><rect x="9.5" y="7.6" width="3.6" height="9" fill="#3c3f41"/><rect x="12.6" y="5.6" width="3.4" height="11" fill="#3c3f41"/><rect x="7" y="11" width="2" height="5" fill="#f26522"/><rect x="10" y="9" width="2.2" height="7" fill="#fbb03b"/><rect x="13" y="7" width="2.2" height="9" fill="#62b543"/></svg>
<div class="t" style="left:61px;top:660.5px;height:20px;line-height:20px;font-size:13px;letter-spacing:0.151px;">local.properties</div>
<svg style="left:43px;top:682px" width="17" height="17" viewBox="0 0 17 17"><path d="M2,5 L6,1 V5 Z" fill="#87939a" opacity="0.85"/><path d="M7,1 H12 V15 H2 V6 H7 Z" fill="#87939a"/><rect x="5.5" y="6" width="10.5" height="10.5" rx="3" fill="#3c3f41" opacity="0"/><path d="M8.6,6.6 C7.2,6.6 7.6,9 7.2,10 C7,10.6 6.2,10.8 6.2,11 C6.2,11.2 7,11.4 7.2,12 C7.6,13 7.2,15.4 8.6,15.4" fill="none" stroke="#3c3f41" stroke-width="2.6"/><path d="M12.4,6.6 C13.8,6.6 13.4,9 13.8,10 C14,10.6 14.8,10.8 14.8,11 C14.8,11.2 14,11.4 13.8,12 C13.4,13 13.8,15.4 12.4,15.4" fill="none" stroke="#3c3f41" stroke-width="2.6"/><ellipse cx="10.5" cy="11" rx="1.9" ry="4" fill="#3c3f41"/><path d="M8.6,6.6 C7.2,6.6 7.6,9 7.2,10 C7,10.6 6.2,10.8 6.2,11 C6.2,11.2 7,11.4 7.2,12 C7.6,13 7.2,15.4 8.6,15.4" fill="none" stroke="#9aa5ac" stroke-width="1.1"/><path d="M12.4,6.6 C13.8,6.6 13.4,9 13.8,10 C14,10.6 14.8,10.8 14.8,11 C14.8,11.2 14,11.4 13.8,12 C13.4,13 13.8,15.4 12.4,15.4" fill="none" stroke="#87939a" stroke-width="1.1"/><ellipse cx="10.5" cy="11" rx="1.1" ry="3.2" fill="none" stroke="#87939a" stroke-width="0.9"/></svg>
<div class="t" style="left:61px;top:680.5px;height:20px;line-height:20px;font-size:13px;letter-spacing:0.064px;">oh-package.json5</div>
<svg style="left:43px;top:702px" width="17" height="17" viewBox="0 0 17 17"><path d="M2,5 L6,1 V5 Z" fill="#87939a" opacity="0.85"/><path d="M7,1 H12 V15 H2 V6 H7 Z" fill="#87939a"/><rect x="5.5" y="6" width="10.5" height="10.5" rx="3" fill="#3c3f41" opacity="0"/><path d="M8.6,6.6 C7.2,6.6 7.6,9 7.2,10 C7,10.6 6.2,10.8 6.2,11 C6.2,11.2 7,11.4 7.2,12 C7.6,13 7.2,15.4 8.6,15.4" fill="none" stroke="#3c3f41" stroke-width="2.6"/><path d="M12.4,6.6 C13.8,6.6 13.4,9 13.8,10 C14,10.6 14.8,10.8 14.8,11 C14.8,11.2 14,11.4 13.8,12 C13.4,13 13.8,15.4 12.4,15.4" fill="none" stroke="#3c3f41" stroke-width="2.6"/><ellipse cx="10.5" cy="11" rx="1.9" ry="4" fill="#3c3f41"/><path d="M8.6,6.6 C7.2,6.6 7.6,9 7.2,10 C7,10.6 6.2,10.8 6.2,11 C6.2,11.2 7,11.4 7.2,12 C7.6,13 7.2,15.4 8.6,15.4" fill="none" stroke="#9aa5ac" stroke-width="1.1"/><path d="M12.4,6.6 C13.8,6.6 13.4,9 13.8,10 C14,10.6 14.8,10.8 14.8,11 C14.8,11.2 14,11.4 13.8,12 C13.4,13 13.8,15.4 12.4,15.4" fill="none" stroke="#87939a" stroke-width="1.1"/><ellipse cx="10.5" cy="11" rx="1.1" ry="3.2" fill="none" stroke="#87939a" stroke-width="0.9"/></svg>
<div class="t" style="left:61px;top:700.5px;height:20px;line-height:20px;font-size:13px;letter-spacing:0.118px;">oh-package-lock.json5</div>
<svg style="left:7.4px;top:723.5px" width="8" height="12" viewBox="0 0 8 12"><path d="M1.9,1.8 L6.1,6 L1.9,10.2" fill="none" stroke="#adafb1" stroke-width="1.3"/></svg>
<svg style="left:24.8px;top:723px" width="15" height="12" viewBox="0 0 15 12"><rect x="0" y="2" width="2" height="10" fill="#87939a"/><rect x="3" y="2" width="2.2" height="10" fill="#62b543"/><rect x="6" y="0" width="2.2" height="12" fill="#87939a"/><rect x="9.2" y="2" width="2.2" height="10" fill="#40b6e0"/><rect x="12.5" y="4" width="2" height="8" fill="#87939a"/></svg>
<div class="t" style="left:43px;top:720.5px;height:20px;line-height:20px;font-size:13px;letter-spacing:-0.083px;">External Libraries</div>
<svg style="left:24.8px;top:742.8px" width="17" height="17" viewBox="0 0 17 17"><rect x="0" y="0" width="10.4" height="9.2" fill="#87939a"/><path d="M1.4,1.8 L4,4 L1.4,6.2" fill="none" stroke="#3c3f41" stroke-width="1.1"/><circle cx="10.2" cy="10.3" r="6.4" fill="#3c3f41"/><circle cx="10.2" cy="10.3" r="5.3" fill="#40b6e0"/><path d="M10,7.4 V10.6 L12,12.2" fill="none" stroke="#2b5a70" stroke-width="1.2"/></svg>
<div class="t" style="left:43px;top:740.5px;height:20px;line-height:20px;font-size:13px;letter-spacing:-0.157px;">Scratches and Consoles</div>
</div>
<div class="a" style="left:61px;top:299px;width:274px;height:227px;border:2px solid #fb1018"></div>
<div class="a" style="left:15px;top:972px;width:472px;height:8px;background:#595b5d"></div>
<div class="vl" style="left:493px;top:75px;height:907px;background:#323232"></div>
<!-- editor tabs -->
<div class="a" style="left:751px;top:75px;width:104px;height:27px;background:#4e5254"></div>
<div class="hl" style="left:494px;top:101px;width:1139px;background:#323232"></div>
<div class="a" style="left:751px;top:99px;width:104px;height:3px;background:#4a8bd0"></div>
<svg style="left:503px;top:80px" width="16" height="16" viewBox="0 0 16 16"><path d="M2,5 L6,1 V5 Z" fill="#87939a" opacity="0.85"/><path d="M7,1 H12 V8 H2 V6 H7 Z" fill="#87939a"/><rect x="0" y="9" width="15" height="7" fill="#3f99be"/><text x="1.6" y="15.1" font-family="Liberation Sans,sans-serif" font-size="6.8" fill="#173a4a" textLength="8.2" lengthAdjust="spacingAndGlyphs">TS</text></svg>
<div class="t" style="left:522px;top:78.5px;height:20px;line-height:20px;font-size:13px;letter-spacing:-0.052px;">EntryAbility.ts</div>
<svg style="left:605.5px;top:83.7px" width="9" height="9" viewBox="0 0 9 9"><path d="M0.6,0.6 L8.4,8.4 M8.4,0.6 L0.6,8.4" stroke="#6e7072" stroke-width="1"/></svg>
<svg style="left:630px;top:82px" width="12" height="12" viewBox="0 0 12 12"><path d="M5.5,0 L0,11 L5.2,7.2 Z" fill="#2a2ad0"/><path d="M5.5,0 L11,11 L5.8,7.4 Z" fill="#d01828"/><path d="M0,11 L11,11 L5.5,7.4 Z" fill="#18c818"/><path d="M5.5,3.6 L3.6,8 L7.4,8 Z" fill="#8a8a8a" opacity="0.55"/></svg>
<div class="t" style="left:646.5px;top:78.5px;height:20px;line-height:20px;font-size:13px;letter-spacing:-0.196px;">CMakeLists.txt</div>
<svg style="left:735.5px;top:83.7px" width="9" height="9" viewBox="0 0 9 9"><path d="M0.6,0.6 L8.4,8.4 M8.4,0.6 L0.6,8.4" stroke="#6e7072" stroke-width="1"/></svg>
<svg style="left:760px;top:80px" width="16" height="16" viewBox="0 0 16 16"><path d="M2,5 L6,1 V5 Z" fill="#87939a" opacity="0.85"/><path d="M7,1 H12 V8 H2 V6 H7 Z" fill="#87939a"/><rect x="0" y="9" width="14.4" height="7" fill="#3f99be"/><text x="1.6" y="15.1" font-family="Liberation Sans,sans-serif" font-size="6.8" fill="#173a4a" textLength="12" lengthAdjust="spacingAndGlyphs">C++</text></svg>
<div class="t" style="left:780px;top:78.5px;height:20px;line-height:20px;font-size:13px;letter-spacing:-0.062px;">hello.cpp</div>
<svg style="left:838.0px;top:83.7px" width="9" height="9" viewBox="0 0 9 9"><path d="M0.6,0.6 L8.4,8.4 M8.4,0.6 L0.6,8.4" stroke="#6e7072" stroke-width="1"/></svg>
<svg style="left:863px;top:80px" width="16" height="16" viewBox="0 0 16 16"><path d="M2,5 L6,1 V5 Z" fill="#87939a" opacity="0.85"/><path d="M7,1 H12 V8 H2 V6 H7 Z" fill="#87939a"/><rect x="0" y="9" width="15" height="7" fill="#3f99be"/><text x="1.6" y="15.1" font-family="Liberation Sans,sans-serif" font-size="6.8" fill="#173a4a" textLength="8.2" lengthAdjust="spacingAndGlyphs">TS</text></svg>
<div class="t" style="left:882px;top:78.5px;height:20px;line-height:20px;font-size:13px;letter-spacing:-0.086px;">index.d.ts</div>
<svg style="left:943.5px;top:83.7px" width="9" height="9" viewBox="0 0 9 9"><path d="M0.6,0.6 L8.4,8.4 M8.4,0.6 L0.6,8.4" stroke="#6e7072" stroke-width="1"/></svg>
<svg style="left:968px;top:80px" width="17" height="17" viewBox="0 0 17 17"><path d="M2,5 L6,1 V5 Z" fill="#87939a" opacity="0.85"/><path d="M7,1 H12 V15 H2 V6 H7 Z" fill="#87939a"/><rect x="5.5" y="6" width="10.5" height="10.5" rx="3" fill="#3c3f41" opacity="0"/><path d="M8.6,6.6 C7.2,6.6 7.6,9 7.2,10 C7,10.6 6.2,10.8 6.2,11 C6.2,11.2 7,11.4 7.2,12 C7.6,13 7.2,15.4 8.6,15.4" fill="none" stroke="#3c3f41" stroke-width="2.6"/><path d="M12.4,6.6 C13.8,6.6 13.4,9 13.8,10 C14,10.6 14.8,10.8 14.8,11 C14.8,11.2 14,11.4 13.8,12 C13.4,13 13.8,15.4 12.4,15.4" fill="none" stroke="#3c3f41" stroke-width="2.6"/><ellipse cx="10.5" cy="11" rx="1.9" ry="4" fill="#3c3f41"/><path d="M8.6,6.6 C7.2,6.6 7.6,9 7.2,10 C7,10.6 6.2,10.8 6.2,11 C6.2,11.2 7,11.4 7.2,12 C7.6,13 7.2,15.4 8.6,15.4" fill="none" stroke="#9aa5ac" stroke-width="1.1"/><path d="M12.4,6.6 C13.8,6.6 13.4,9 13.8,10 C14,10.6 14.8,10.8 14.8,11 C14.8,11.2 14,11.4 13.8,12 C13.4,13 13.8,15.4 12.4,15.4" fill="none" stroke="#87939a" stroke-width="1.1"/><ellipse cx="10.5" cy="11" rx="1.1" ry="3.2" fill="none" stroke="#87939a" stroke-width="0.9"/></svg>
<div class="t" style="left:987px;top:78.5px;height:20px;line-height:20px;font-size:13px;letter-spacing:0.083px;">oh-package.json5</div>
<svg style="left:1097.5px;top:83.7px" width="9" height="9" viewBox="0 0 9 9"><path d="M0.6,0.6 L8.4,8.4 M8.4,0.6 L0.6,8.4" stroke="#6e7072" stroke-width="1"/></svg>
<svg style="left:1122px;top:80px" width="17" height="17" viewBox="0 0 17 17"><path d="M2,5 L6,1 V5 Z" fill="#87939a" opacity="0.85"/><path d="M7,1 H12 V15 H2 V6 H7 Z" fill="#87939a"/><rect x="5.5" y="6" width="10.5" height="10.5" rx="3" fill="#3c3f41" opacity="0"/><path d="M8.6,6.6 C7.2,6.6 7.6,9 7.2,10 C7,10.6 6.2,10.8 6.2,11 C6.2,11.2 7,11.4 7.2,12 C7.6,13 7.2,15.4 8.6,15.4" fill="none" stroke="#3c3f41" stroke-width="2.6"/><path d="M12.4,6.6 C13.8,6.6 13.4,9 13.8,10 C14,10.6 14.8,10.8 14.8,11 C14.8,11.2 14,11.4 13.8,12 C13.4,13 13.8,15.4 12.4,15.4" fill="none" stroke="#3c3f41" stroke-width="2.6"/><ellipse cx="10.5" cy="11" rx="1.9" ry="4" fill="#3c3f41"/><path d="M8.6,6.6 C7.2,6.6 7.6,9 7.2,10 C7,10.6 6.2,10.8 6.2,11 C6.2,11.2 7,11.4 7.2,12 C7.6,13 7.2,15.4 8.6,15.4" fill="none" stroke="#9aa5ac" stroke-width="1.1"/><path d="M12.4,6.6 C13.8,6.6 13.4,9 13.8,10 C14,10.6 14.8,10.8 14.8,11 C14.8,11.2 14,11.4 13.8,12 C13.4,13 13.8,15.4 12.4,15.4" fill="none" stroke="#87939a" stroke-width="1.1"/><ellipse cx="10.5" cy="11" rx="1.1" ry="3.2" fill="none" stroke="#87939a" stroke-width="0.9"/></svg>
<div class="t" style="left:1141px;top:78.5px;height:20px;line-height:20px;font-size:13px;letter-spacing:0.053px;">module.json5</div>
<svg style="left:1224.5px;top:83.7px" width="9" height="9" viewBox="0 0 9 9"><path d="M0.6,0.6 L8.4,8.4 M8.4,0.6 L0.6,8.4" stroke="#6e7072" stroke-width="1"/></svg>
<svg style="left:1250px;top:80px" width="16" height="16" viewBox="0 0 16 16"><path d="M2,5 L6,1 V5 Z" fill="#87939a" opacity="0.85"/><path d="M7,1 H12 V8 H2 V6 H7 Z" fill="#87939a"/><rect x="0.5" y="9.5" width="13" height="6" fill="#2c566b" stroke="#3f99be" stroke-width="1"/><text x="1.5" y="15" font-family="Liberation Sans,sans-serif" font-size="6.4" fill="#49a9d0" textLength="11.2" lengthAdjust="spacingAndGlyphs">ETS</text></svg>
<div class="t" style="left:1269px;top:78.5px;height:20px;line-height:20px;font-size:13px;letter-spacing:-0.085px;">Index.ets</div>
<svg style="left:1327.5px;top:83.7px" width="9" height="9" viewBox="0 0 9 9"><path d="M0.6,0.6 L8.4,8.4 M8.4,0.6 L0.6,8.4" stroke="#6e7072" stroke-width="1"/></svg>
<!-- editor -->
<div class="a" style="left:494px;top:102px;width:1139px;height:855px;background:#2b2b2b;overflow:hidden">
<div class="a" style="left:0;top:0;width:65px;height:856px;background:#313335"></div>
<div class="a" style="left:66px;top:352px;width:1073px;height:22px;background:#323232"></div>
<div class="vl" style="left:65px;top:0;height:856px;background:#555555"></div>
<div class="vl" style="left:1031px;top:0;height:856px;background:#4f4f4f"></div>
<div class="a" style="left:55px;top:352px;width:1px;height:88px;background:#567c74"></div>
<div class="vl" style="left:101px;top:374px;height:44px;background:#3a3a3a"></div>
<div class="vl" style="left:101px;top:506px;height:22px;background:#3a3a3a"></div>
<div class="vl" style="left:101px;top:616px;height:22px;background:#3a3a3a"></div>
<div class="vl" style="left:101px;top:726px;height:22px;background:#3a3a3a"></div>
<svg style="left:61px;top:7px" width="9" height="12" viewBox="0 0 9 12"><path d="M0.5,0.5 H8.5 V7 L4.5,11.3 L0.5,7 Z" fill="#2b2b2b" stroke="#606366" stroke-width="1"/><path d="M2.5,4.5 H6.5" stroke="#606366" stroke-width="1"/></svg>
<svg style="left:61px;top:70px" width="9" height="12" viewBox="0 0 9 12"><path d="M0.5,11.5 H8.5 V5 L4.5,0.7 L0.5,5 Z" fill="#2b2b2b" stroke="#606366" stroke-width="1"/><path d="M2.5,7.5 H6.5" stroke="#606366" stroke-width="1"/></svg>
<svg style="left:61px;top:337px" width="9" height="12" viewBox="0 0 9 12"><path d="M0.5,0.5 H8.5 V7 L4.5,11.3 L0.5,7 Z" fill="#2b2b2b" stroke="#606366" stroke-width="1"/><path d="M2.5,4.5 H6.5" stroke="#606366" stroke-width="1"/></svg>
<svg style="left:61px;top:359px" width="9" height="12" viewBox="0 0 9 12"><path d="M0.5,0.5 H8.5 V7 L4.5,11.3 L0.5,7 Z" fill="#2b2b2b" stroke="#606366" stroke-width="1"/><path d="M2.5,4.5 H6.5" stroke="#606366" stroke-width="1"/></svg>
<svg style="left:61px;top:422px" width="9" height="12" viewBox="0 0 9 12"><path d="M0.5,11.5 H8.5 V5 L4.5,0.7 L0.5,5 Z" fill="#2b2b2b" stroke="#606366" stroke-width="1"/><path d="M2.5,7.5 H6.5" stroke="#606366" stroke-width="1"/></svg>
<svg style="left:61px;top:491px" width="9" height="12" viewBox="0 0 9 12"><path d="M0.5,0.5 H8.5 V7 L4.5,11.3 L0.5,7 Z" fill="#2b2b2b" stroke="#606366" stroke-width="1"/><path d="M2.5,4.5 H6.5" stroke="#606366" stroke-width="1"/></svg>
<svg style="left:61px;top:532px" width="9" height="12" viewBox="0 0 9 12"><path d="M0.5,11.5 H8.5 V5 L4.5,0.7 L0.5,5 Z" fill="#2b2b2b" stroke="#606366" stroke-width="1"/><path d="M2.5,7.5 H6.5" stroke="#606366" stroke-width="1"/></svg>
<svg style="left:61px;top:601px" width="9" height="12" viewBox="0 0 9 12"><path d="M0.5,0.5 H8.5 V7 L4.5,11.3 L0.5,7 Z" fill="#2b2b2b" stroke="#606366" stroke-width="1"/><path d="M2.5,4.5 H6.5" stroke="#606366" stroke-width="1"/></svg>
<svg style="left:61px;top:642px" width="9" height="12" viewBox="0 0 9 12"><path d="M0.5,11.5 H8.5 V5 L4.5,0.7 L0.5,5 Z" fill="#2b2b2b" stroke="#606366" stroke-width="1"/><path d="M2.5,7.5 H6.5" stroke="#606366" stroke-width="1"/></svg>
<svg style="left:61px;top:711px" width="9" height="12" viewBox="0 0 9 12"><path d="M0.5,0.5 H8.5 V7 L4.5,11.3 L0.5,7 Z" fill="#2b2b2b" stroke="#606366" stroke-width="1"/><path d="M2.5,4.5 H6.5" stroke="#606366" stroke-width="1"/></svg>
<svg style="left:61px;top:752px" width="9" height="12" viewBox="0 0 9 12"><path d="M0.5,11.5 H8.5 V5 L4.5,0.7 L0.5,5 Z" fill="#2b2b2b" stroke="#606366" stroke-width="1"/><path d="M2.5,7.5 H6.5" stroke="#606366" stroke-width="1"/></svg>
<svg style="left:61px;top:843px" width="9" height="12" viewBox="0 0 9 12"><path d="M0.5,0.5 H8.5 V7 L4.5,11.3 L0.5,7 Z" fill="#2b2b2b" stroke="#606366" stroke-width="1"/><path d="M2.5,4.5 H6.5" stroke="#606366" stroke-width="1"/></svg>
</div>
<div id="nums" style="height:854px;overflow:hidden"><div>1</div><div>2</div><div>3</div><div>4</div><div>5</div><div>6</div><div>7</div><div>8</div><div>9</div><div>10</div><div>11</div><div>12</div><div>13</div><div>14</div><div>15</div><div>16</div><div style="color:#a4a3a3">17</div><div>18</div><div>19</div><div>20</div><div>21</div><div>22</div><div>23</div><div>24</div><div>25</div><div>26</div><div>27</div><div>28</div><div>29</div><div>30</div><div>31</div><div>32</div><div>33</div><div>34</div><div>35</div><div>36</div><div>37</div><div>38</div><div>39</div></div>
<div id="code" style="height:854px;overflow:hidden"><div class="l"><span class="m">#include &quot;sensors/oh_sensor.h&quot;</span></div><div class="l"><span class="m">#include &quot;napi/native_api.h&quot;</span></div><div class="l"><span class="m">#include &quot;hilog/log.h&quot;</span></div><div class="l"><span class="m">#include &lt;thread&gt;</span></div><div class="l"></div><div class="l"><span class="k">const int</span> GLOBAL_<span class="w">RESMGR</span> = <span class="n">0xFF00</span><span class="k">;</span></div><div class="l"><span class="k">const char</span> *TAG = <span class="s">&quot;[Sensor]&quot;</span><span class="k">;</span></div><div class="l"><span class="k">constexpr</span> Sensor_Type SENSOR_ID { <span class="c">SENSOR_TYPE_ACCELEROMETER</span> }<span class="k">;</span></div><div class="l"><span class="k">constexpr</span> <span class="w">uint</span>32_t SENSOR_NAME_LENGTH_MAX = <span class="n">64</span><span class="k">;</span></div><div class="l"><span class="k">constexpr</span> int64_t SENSOR_SAMPLE_PERIOD = <span class="n">200000000</span><span class="k">;</span></div><div class="l"><span class="k">constexpr</span> int32_t SLEEP_TIME_MS = <span class="n">1000</span><span class="k">;</span></div><div class="l"><span class="k">constexpr</span> int64_t INVALID_VALUE = -<span class="n">1</span><span class="k">;</span></div><div class="l"><span class="k">constexpr float</span> INVALID_RESOLUTION = -<span class="n">1.0F</span><span class="k">;</span></div><div class="l">Sensor_Subscriber *g_user = <span class="k">nullptr;</span></div><div class="l"></div><div class="l"><span class="k">void</span> <span class="f">SensorDataCallbackImpl</span>(Sensor_Event *event) {</div><div class="l">    <span class="k">if</span> (event == <span class="k">nullptr</span>) <span class="br">{</span><span class="caret"></span></div><div class="l">        <span class="f">OH_LOG_Print</span>(<span class="c">LOG_APP</span><span class="k">,</span> <span class="c">LOG_INFO</span><span class="k">,</span> GLOBAL_<span class="w">RESMGR</span><span class="k">,</span> TAG<span class="k">,</span> <span class="s">&quot;event is null&quot;</span>)<span class="k">;</span></div><div class="l">        <span class="k">return;</span></div><div class="l">    <span class="br">}</span></div><div class="l">    int64_t timestamp = INVALID_VALUE<span class="k">;</span></div><div class="l">    int32_t ret = <span class="f">OH_SensorEvent_GetTimestamp</span>(event<span class="k">,</span> &amp;timestamp)<span class="k">;</span> <span class="cm">// <span class="cj">获取传感器数据的时间戳。</span></span></div><div class="l">    <span class="k">if</span> (ret != <span class="c">SENSOR_SUCCESS</span>) {</div><div class="l">        <span class="k">return;</span></div><div class="l">    }</div><div class="l">    Sensor_Type sensorType<span class="k">;</span></div><div class="l">    ret = <span class="f">OH_SensorEvent_GetType</span>(event<span class="k">,</span> &amp;sensorType)<span class="k">;</span> <span class="cm">// <span class="cj">获取传感器类型。</span></span></div><div class="l">    <span class="k">if</span> (ret != <span class="c">SENSOR_SUCCESS</span>) {</div><div class="l">        <span class="k">return;</span></div><div class="l">    }</div><div class="l">    Sensor_Accuracy accuracy = <span class="c">SENSOR_ACCURACY_UNRELIABLE</span><span class="k">;</span></div><div class="l">    ret = <span class="f">OH_SensorEvent_GetAccuracy</span>(event<span class="k">,</span> &amp;accuracy)<span class="k">;</span> <span class="cm">// <span class="cj">获取传感器数据的精度。</span></span></div><div class="l">    <span class="k">if</span> (ret != <span class="c">SENSOR_SUCCESS</span>) {</div><div class="l">        <span class="k">return;</span></div><div class="l">    }</div><div class="l">    <span class="k">float</span> *data = <span class="k">nullptr;</span></div><div class="l">    <span class="w">uint</span>32_t length = <span class="n">0</span><span class="k">;</span></div><div class="l">    ret = <span class="f">OH_SensorEvent_GetData</span>(event<span class="k">,</span> &amp;data<span class="k">,</span> &amp;length)<span class="k">;</span> <span class="cm">// <span class="cj">获取传感器数据。</span></span></div><div class="l">    <span class="k">if</span> (ret != <span class="c">SENSOR_SUCCESS</span>) {</div></div>
<!-- editor breadcrumbs -->
<div class="a" style="left:494px;top:957px;width:1139px;height:24px;background:#313335"></div>
<div class="hl" style="left:494px;top:957px;width:1139px;background:#5a5a5a"></div>
<svg style="left:505px;top:962px" width="14" height="14" viewBox="0 0 14 14"><circle cx="7" cy="7" r="7" fill="#ad8233"/><text x="5.2" y="10.9" font-family="Liberation Sans,sans-serif" font-size="11" fill="#3b2e12">f</text></svg>
<div class="t" style="left:524.4px;top:959.5px;height:20px;line-height:20px;font-size:13px;letter-spacing:-0.115px;">SensorDataCallbackImpl()</div>
<!-- bottom tool window bar -->
<div class="hl" style="left:0;top:981px;width:1633px;background:#323232"></div>
<div class="hl" style="left:0;top:1004px;width:1633px;background:#4b4b4b"></div>
<svg style="left:28px;top:987px" width="9" height="13" viewBox="0 0 9 13"><path d="M2,1 V12 M2,8 C2,6 7,7 7,3" fill="none" stroke="#afb1b3" stroke-width="1.5"/><circle cx="2" cy="1.8" r="1.6" fill="#afb1b3"/><circle cx="7" cy="2.4" r="1.6" fill="#afb1b3"/><circle cx="2" cy="11" r="1.6" fill="#afb1b3"/></svg>
<div class="t" style="left:43px;top:983.5px;height:20px;line-height:20px;font-size:11.7px;letter-spacing:0.033px;">Version Control</div>
<svg style="left:148px;top:988px" width="11" height="10" viewBox="0 0 11 10"><path d="M0,1.4 H2 M3.2,1.4 H10 M0,5.4 H2 M3.2,5.4 H10 M0,9.4 H2 M3.2,9.4 H10" stroke="#afb1b3" stroke-width="1.7"/></svg>
<div class="t" style="left:163px;top:983.5px;height:20px;line-height:20px;font-size:11.7px;letter-spacing:-0.387px;">TODO</div>
<svg style="left:216.5px;top:987px" width="12" height="12" viewBox="0 0 12 12"><circle cx="5.6" cy="5.6" r="5.4" fill="#afb1b3"/><path d="M5.6,2.4 V6.6 M5.6,7.8 V9.2" stroke="#3c3f41" stroke-width="1.6"/></svg>
<div class="t" style="left:232.3px;top:983.5px;height:20px;line-height:20px;font-size:11.7px;letter-spacing:-0.12px;">Problems</div>
<svg style="left:302.6px;top:988px" width="12" height="10" viewBox="0 0 12 10"><rect x="0" y="0" width="12" height="10" fill="#afb1b3"/><path d="M2,2.4 L4.8,5 L2,7.6 M6,7.6 H9.6" fill="none" stroke="#3c3f41" stroke-width="1.2"/></svg>
<div class="t" style="left:319.3px;top:983.5px;height:20px;line-height:20px;font-size:11.7px;letter-spacing:0.005px;">Terminal</div>
<svg style="left:383.6px;top:988px" width="17" height="10" viewBox="0 0 17 10"><path d="M1,9.4 A6.4,6.4 0 0 1 10.2,1.8 M12.6,3.6 A6.4,6.4 0 0 1 14.4,9.4" fill="none" stroke="#afb1b3" stroke-width="1.6"/><path d="M7,8.6 L12.4,1.6" stroke="#afb1b3" stroke-width="1.8"/></svg>
<div class="t" style="left:404.2px;top:983.5px;height:20px;line-height:20px;font-size:11.7px;letter-spacing:0.036px;">Profiler</div>
<svg style="left:462px;top:987px" width="13" height="13" viewBox="0 0 13 13"><rect x="0" y="1.4" width="12.6" height="10.8" fill="#afb1b3"/><rect x="2" y="0" width="2" height="2.4" fill="#afb1b3"/><rect x="8.6" y="0" width="2" height="2.4" fill="#afb1b3"/><path d="M2,4 H7.4 M2,6.7 H10.6 M2,9.5 H10.6" stroke="#3c3f41" stroke-width="1.2"/></svg>
<div class="t" style="left:479.2px;top:983.5px;height:20px;line-height:20px;font-size:11.7px;letter-spacing:-0.233px;">Log</div>
<svg style="left:518.6px;top:987px" width="14" height="14" viewBox="0 0 14 14"><circle cx="5.8" cy="5.8" r="4.7" fill="none" stroke="#afb1b3" stroke-width="2"/><path d="M9.2,9.2 L13,13" stroke="#afb1b3" stroke-width="2.2"/><path d="M4.4,4.4 L3.2,5.8 L4.4,7.2 M7.2,4.4 L8.4,5.8 L7.2,7.2 M6.3,4 L5.3,7.6" fill="none" stroke="#afb1b3" stroke-width="0.9"/></svg>
<div class="t" style="left:535.8px;top:983.5px;height:20px;line-height:20px;font-size:11.7px;letter-spacing:-0.038px;">Code Linter</div>
<svg style="left:617.2px;top:987.4px" width="13" height="13" viewBox="0 0 13 13"><path d="M3.4,0.2 H9.6 L12.8,6.4 L9.6,12.6 H3.4 L0.2,6.4 Z" fill="#afb1b3"/><path d="M4.8,3.2 L9.4,6.4 L4.8,9.6 Z" fill="#3c3f41"/></svg>
<div class="t" style="left:634.4px;top:983.5px;height:20px;line-height:20px;font-size:11.7px;letter-spacing:-0.402px;">Services</div>
<!-- status bar -->
<svg style="left:0px;top:1009px" width="10" height="8" viewBox="0 0 10 8"><rect x="-0.2" y="0.7" width="9.6" height="9" fill="none" stroke="#afb1b3" stroke-width="1.5"/></svg>
<div class="t" style="left:19px;top:1004.1px;height:20px;line-height:20px;font-size:11.7px;letter-spacing:0.585px;">Sync project finished in 3 s 609 ms (10 minutes ago)</div>
</div>
</body></html>
